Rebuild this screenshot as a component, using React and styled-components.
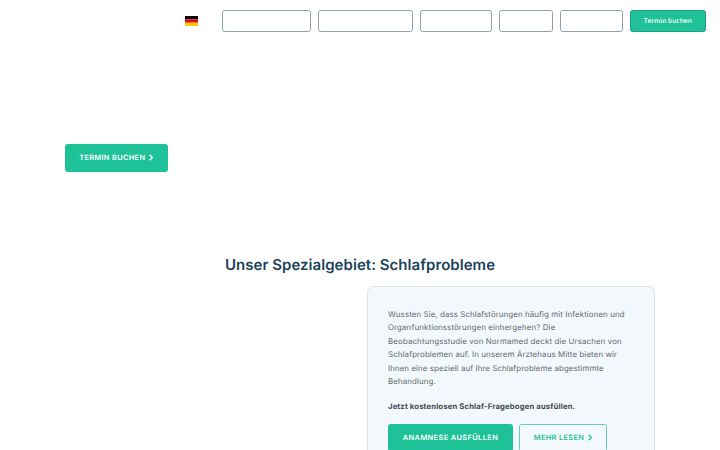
import React from 'react';
import styled, { createGlobalStyle } from 'styled-components';

const GlobalStyle = createGlobalStyle`
  * {
    box-sizing: border-box;
  }

  body {
    margin: 0;
    background: #fff;
    font-family: Inter, 'Open Sans', sans-serif;
    text-rendering: geometricPrecision;
  }
`;

const Page = styled.div`
  width: 720px;
  height: 450px;
  overflow: hidden;
`;

const Header = styled.header`
  display: flex;
  align-items: flex-start;
  gap: 7px;
  height: 144px;
  padding: 10px 14px 0 185px;
`;

const Flag = styled.svg`
  width: 13px;
  height: 10px;
  margin: 6px 17px 0 0;
`;

const NavItem = styled.a`
  width: ${({ $width }) => $width}px;
  height: 22px;
  flex: none;
  border: 1px solid #91a1ab;
  border-radius: 2.5px;
`;

const NavButton = styled(NavItem)`
  display: flex;
  align-items: center;
  justify-content: center;
  padding-bottom: 2px;
  border-color: #1f9d86;
  background: #1ec198;
  color: #fff;
  font: 600 6.6px 'Open Sans', sans-serif;
`;

const Hero = styled.section`
  height: 110px;
  padding-left: 65px;
`;

const Button = styled.a`
  display: flex;
  align-items: center;
  justify-content: center;
  gap: 4px;
  width: ${({ $width }) => $width}px;
  height: 28px;
  padding-bottom: 1px;
  border: 1px solid ${({ $outline }) => ($outline ? '#67cdb6' : '#1ec198')};
  border-radius: 2.5px;
  background: ${({ $outline }) => ($outline ? 'transparent' : '#1ec198')};
  color: ${({ $outline }) => ($outline ? '#1ec198' : '#fff')};
  font-size: 7.4px;
  font-weight: 600;
  letter-spacing: ${({ $spacing }) => $spacing || 0}px;
  white-space: nowrap;
`;

const Title = styled.h2`
  height: 32px;
  margin: 0;
  color: #1b435b;
  font-size: 15px;
  font-weight: 600;
  line-height: 22px;
  letter-spacing: 0.04px;
  text-align: center;
`;

const Card = styled.section`
  width: 288px;
  height: 190px;
  margin-left: 367px;
  padding: 20.5px 20px 20px;
  border: 1px solid #dce3e8;
  border-radius: 6px;
  background: #f3f8fc;
  color: #626970;
`;

const Text = styled.p`
  margin: 0 0 10.5px;
  font-size: 7.9px;
  line-height: 13.6px;
`;

const Line = styled.span`
  display: block;
  letter-spacing: ${({ $spacing }) => $spacing}px;
  white-space: nowrap;
`;

const Strong = styled.p`
  margin: 0 0 11px;
  color: #454b54;
  font-size: 7.7px;
  font-weight: 700;
  line-height: 13.6px;
  letter-spacing: 0.15px;
`;

const Actions = styled.div`
  display: flex;
  gap: 6px;
`;

const navWidths = [89, 95, 72, 54, 62.5];

const Chevron = () => (
  <svg width="4" height="7" viewBox="0 0 4 7" fill="none" stroke="currentColor" strokeWidth="1.3">
    <path d="M0.6 0.7 3.3 3.5 0.6 6.3" />
  </svg>
);

const App = () => {
  return (
    <Page>
      <GlobalStyle />
      <Header>
        <Flag viewBox="0 0 13 10" preserveAspectRatio="none">
          <path fill="#080808" d="M0 0h13v3.4H0z" />
          <path fill="#dd0b15" d="M0 3.4h13v3.3H0z" />
          <path fill="#ffc800" d="M0 6.7h13V10H0z" />
        </Flag>
        {navWidths.map((width) => (
          <NavItem key={width} $width={width} />
        ))}
        <NavButton $width={76.5}>Termin buchen</NavButton>
      </Header>
      <Hero>
        <Button $width={102.5} $spacing={0.33}>TERMIN BUCHEN <Chevron /></Button>
      </Hero>
      <Title>Unser Spezialgebiet: Schlafprobleme</Title>
      <Card>
        <Text>
          <Line $spacing={0.09}>Wussten Sie, dass Schlafstörungen häufig mit Infektionen und</Line>
          <Line $spacing={0.12}>Organfunktionsstörungen einhergehen? Die</Line>
          <Line $spacing={0.13}>Beobachtungsstudie von Normamed deckt die Ursachen von</Line>
          <Line $spacing={0.11}>Schlafproblemen auf. In unserem Ärztehaus Mitte bieten wir</Line>
          <Line $spacing={0.08}>Ihnen eine speziell auf Ihre Schlafprobleme abgestimmte</Line>
          <Line $spacing={0.1}>Behandlung.</Line>
        </Text>
        <Strong>Jetzt kostenlosen Schlaf-Fragebogen ausfüllen.</Strong>
        <Actions>
          <Button $width={125} $spacing={0.4}>ANAMNESE AUSFÜLLEN</Button>
          <Button $outline $width={88} $spacing={0.35}>MEHR LESEN <Chevron /></Button>
        </Actions>
      </Card>
    </Page>
  );
};

export default App;
